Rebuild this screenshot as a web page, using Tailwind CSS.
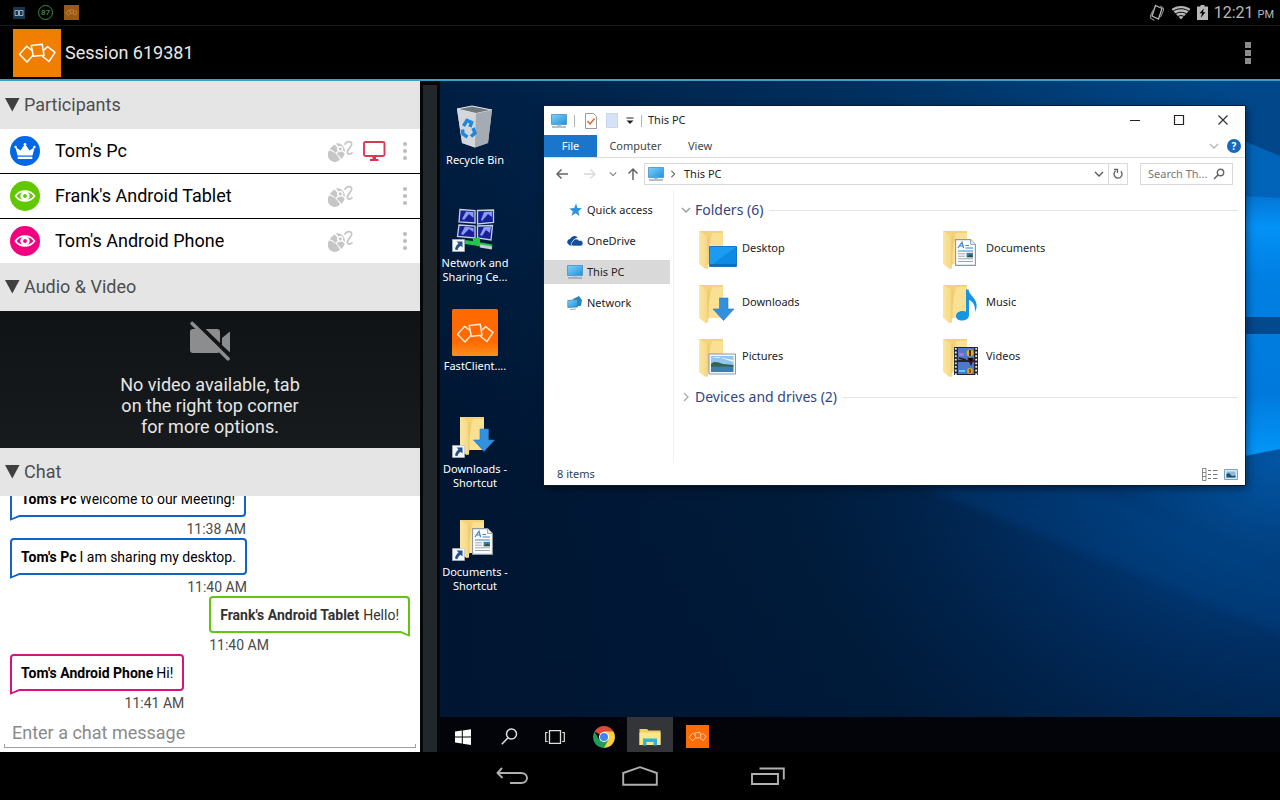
<!DOCTYPE html>
<html lang="en">
<head>
    <meta charset="UTF-8">
    <meta name="viewport" content="width=device-width, initial-scale=1.0">
    <title>Session 619381</title>
    <script src="https://cdn.jsdelivr.net/npm/@tailwindcss/browser@4"></script>
    <style>
        body {
            font-family: Roboto, "Liberation Sans", sans-serif;
        }
        .desktop {
            font-family: "Noto Sans", "Open Sans", sans-serif;
        }
    </style>
</head>
<body class="flex h-screen flex-col overflow-hidden bg-black text-white">

    <!-- Shared icons (not display:none, the gradients would be lost) -->
    <svg class="absolute size-0" aria-hidden="true">
        <defs>
            <linearGradient id="folderFront" x1="0" y1="0" x2="1" y2="0">
                <stop offset="0" stop-color="#fbe6a2"/>
                <stop offset="1" stop-color="#f5d77f"/>
            </linearGradient>
            <linearGradient id="screenBlue" x1="0" y1="0" x2="1" y2="1">
                <stop offset="0" stop-color="#7fd0f8"/>
                <stop offset="1" stop-color="#1d93e0"/>
            </linearGradient>
            <linearGradient id="orange" x1="0" y1="0" x2="0" y2="1">
                <stop offset="0" stop-color="#ff6a00"/>
                <stop offset=".7" stop-color="#ff6a00"/>
                <stop offset="1" stop-color="#fb9020"/>
            </linearGradient>
        </defs>
        <symbol id="squares" viewBox="0 0 48 48">
            <g fill="none" stroke="currentColor" stroke-width="1.5" stroke-linejoin="round">
                <path d="M19 21.5 13.7 17.3 6.5 25.3 14 33 20.5 25.8"/>
                <path d="M18.2 16.5 29.2 15.2 31 26.3 20.3 27.2Z"/>
                <path d="M30.5 21.5 34.6 17.6 42 23.4 36 32.5 29.3 27.2"/>
            </g>
        </symbol>
        <symbol id="mouse" viewBox="0 0 26 22">
            <g fill="#c6c6c6">
                <path d="M1.200 10.600C5 11 9.500 14.800 12 19.500A7 7 0 0 1 1.200 10.600Z"/>
                <path d="M1.800 9.300C2.600 7.500 4.600 5.600 6.600 4.400L9.400 7.400A2.800 2.800 0 0 0 9.800 10.800L7.600 12.900C6 11.200 4 9.900 1.800 9.300Z"/>
                <path d="M13.200 18.900C12.200 17.200 10.600 15.200 8.700 13.800L11 11.600A2.800 2.800 0 0 0 14.200 11.200L16.600 13.600C16.200 15.800 15 17.800 13.200 18.900Z"/>
                <path d="M8 3.700C11.500 1.900 17.600 6 16.900 12L14.800 10A2.800 2.800 0 0 0 10.600 6.400Z"/>
                <circle cx="12.200" cy="8.900" r="1.600"/>
            </g>
            <path d="M17 4.200C18.500 .8 24.300 .6 23.600 4.600 23 7.800 18.500 9.800 19.400 12.800 20 14.800 22.500 14.500 24 12.800" fill="none" stroke="#c6c6c6" stroke-width="1.700" stroke-linecap="round"/>
        </symbol>
        <symbol id="eye" viewBox="0 0 30 30">
            <path d="M5.500 15C10 8.500 20 8.500 24.500 15 20 21.500 10 21.500 5.500 15Z" fill="none" stroke="#fff" stroke-width="1.800" stroke-linejoin="round"/>
            <circle cx="15" cy="15" r="3.300" fill="none" stroke="#fff" stroke-width="2.800"/>
        </symbol>
        <symbol id="dots" viewBox="0 0 6 20">
            <g fill="#bdbdbd">
                <circle cx="3" cy="3" r="2.100"/>
                <circle cx="3" cy="10" r="2.100"/>
                <circle cx="3" cy="17" r="2.100"/>
            </g>
        </symbol>
        <symbol id="pc" viewBox="0 0 16 16">
            <path d="M.5 1.500H15.500V11.500H.5Z" fill="url(#screenBlue)" stroke="#4a8fc0" stroke-width=".8"/>
            <path d="M6 11.800H10V13H6Z" fill="#a8c4d8"/>
            <path d="M1 14H15" stroke="#7f97a8" stroke-width="1.200"/>
        </symbol>
        <symbol id="folder" viewBox="0 0 40 40">
            <path d="M1 1H25V34H8Z" fill="#f3d27a"/>
            <path d="M14 3 25 3V34H8Z" fill="#f9e093"/>
            <path d="M1 1 10 6V38.500L7.500 39 1 34Z" fill="url(#folderFront)"/>
            <path d="M10 6V35" stroke="#e3bd61" stroke-width=".7"/>
        </symbol>
        <symbol id="arrowDown" viewBox="0 0 22 24">
            <path d="M7 1H15.500V12H21.500L11 23.500.5 12H7Z" fill="#3390dc" stroke="#2577c4" stroke-width=".6"/>
        </symbol>
        <symbol id="document" viewBox="0 0 21 27">
            <path d="M.6.6H15.500L20.400 5.500V26.400H.6Z" fill="#fff" stroke="#8c98a3" stroke-width="1.100"/>
            <path d="M15.500.6V5.500H20.400" fill="#e5eaee" stroke="#8c98a3" stroke-width=".8"/>
            <path d="M3 9 7 3.200 8.600 9M4.600 7H8" fill="none" stroke="#3c84c4" stroke-width="1.200"/>
            <path d="M10.500 6.500H14M10.500 9H18M3 12H18" stroke="#3c84c4" stroke-width="1.100"/>
            <path d="M3 14.800H10M3 17.200H10M3 19.800H18M3 22.500H18" stroke="#9aa7b2" stroke-width="1"/>
            <path d="M11.500 13.800H18V18.200H11.500Z" fill="#3f7fa8"/>
            <path d="M11.500 18.200 15 15.500 18 17V18.200Z" fill="#2c5345"/>
        </symbol>
        <symbol id="shortcut" viewBox="0 0 13 13">
            <path d="M.5.500H12.500V12.500H.500Z" fill="#f4f6f9" stroke="#b9c0c8" stroke-width=".6"/>
            <path d="M4.600 2.500H10.500V8.400L8.700 6.700C6.800 8 5.800 9.300 5.500 11.200L3 10.500C3.300 8.200 4.500 6.300 6.500 4.500Z" fill="#23528f"/>
        </symbol>
        <symbol id="chevron" viewBox="0 0 10 10">
            <path d="M1 3 5 7 9 3" fill="none" stroke="currentColor" stroke-width="1.300"/>
        </symbol>
        <symbol id="tailLeft" viewBox="0 0 12 10">
            <path d="M0 0H12V5H10L1 9.600V0Z" fill="#fff"/>
            <path d="M1 0V8.300L9 5H12" fill="none" stroke="currentColor" stroke-width="2"/>
            <path d="M2 0H12V4H9L2 7Z" fill="#fff"/>
        </symbol>
    </svg>

    <!-- Status bar -->
    <div class="flex h-[26px] shrink-0 items-center border-b border-[#1a1a1a] pr-1.5 pl-[13px] text-[#b8b8b8]">
        <svg class="size-3" viewBox="0 0 12 12">
            <path d="M0 0H12V12H0Z" fill="#17364f"/>
            <path d="M2 3.500H5.500V8.500H2ZM6.500 3.500H10V8.500H6.500Z" fill="none" stroke="#a9bac6" stroke-width=".9"/>
        </svg>
        <span class="ml-[13px] flex size-[15px] items-center justify-center rounded-full border border-[#3d8a48] text-[8px] leading-none text-[#5aa863]">87</span>
        <svg class="ml-[11px] size-[15px] bg-[#9c5a10] text-[#d3a776]"><use href="#squares"/></svg>
        <svg class="ml-auto h-[18px] w-4" viewBox="0 0 16 18">
            <path d="M6.500 1.500 13 4.500 9.500 15 3 12Z" fill="none" stroke="#b8b8b8" stroke-width="1.300"/>
            <path d="M4.500 5.500 1.500 11.500V14L5.500 16.500M11.500 2 14.500 4.500V6.500L11.500 13" fill="none" stroke="#8a8a8a" stroke-width="1.100"/>
        </svg>
        <svg class="ml-1.5 h-[15px] w-5" viewBox="0 0 20 15">
            <path d="M10 14.500.5 4C6 0 14 0 19.500 4Z" fill="#b8b8b8"/>
            <path d="M1.500 6.500C7 2.800 13 2.800 18.500 6.500M4 9.300C7.500 6.600 12.500 6.600 16 9.300M6.500 11.800C8.500 10.200 11.500 10.200 13.500 11.800" fill="none" stroke="#000" stroke-width="1"/>
        </svg>
        <svg class="ml-1.5 h-[15px] w-[11px]" viewBox="0 0 11 15">
            <path d="M3.500 0H7.500V1.500H11V15H0V1.500H3.500Z" fill="#b8b8b8"/>
            <path d="M6.800 3.500 2.500 8.300H5L3.800 12.800 8.500 7.300H6Z" fill="#000"/>
        </svg>
        <span class="ml-1.5 text-base leading-none">12:21 <span class="text-[11px]">PM</span></span>
    </div>

    <!-- Action bar -->
    <header class="flex h-[55px] shrink-0 items-center border-b-2 border-[#3aa0c8] pl-[13px]">
        <svg class="size-12 bg-[#f07f00] text-white"><use href="#squares"/></svg>
        <h1 class="ml-1 text-lg text-[#e8e8e8]">Session 619381</h1>
        <button type="button" aria-label="More options" class="ml-auto flex h-full w-16 flex-col items-center justify-center gap-0.5">
            <span class="size-1.5 bg-[#8b8b8b]"></span>
            <span class="size-1.5 bg-[#8b8b8b]"></span>
            <span class="size-1.5 bg-[#8b8b8b]"></span>
        </button>
    </header>

    <main class="flex min-h-0 flex-1">
        <!-- Session panel -->
        <aside class="flex w-[420px] shrink-0 flex-col bg-white text-black">
            <button type="button" class="flex h-12 shrink-0 items-center gap-1 bg-[#e5e5e5] pl-[5px] text-left text-lg text-[#4d4d4d]">
                <svg class="h-3.5 w-[15px]" viewBox="0 0 15 14"><path d="M0 0H14.500L7.300 13.500Z" fill="#3f3f3f"/></svg>
                Participants
            </button>
            <ul class="shrink-0 divide-y divide-black text-lg">
                <li class="flex h-[45px] items-center pl-2.5">
                    <span class="size-[30px] rounded-full bg-[#0068e6]">
                        <svg viewBox="0 0 30 30">
                            <path d="M7.500 19.500 5.300 11 10.500 14.500 15 8 19.500 14.500 24.700 11 22.500 19.500Z" fill="#fff"/>
                            <circle cx="5.600" cy="11" r="1.200" fill="#fff"/><circle cx="15" cy="8.200" r="1.300" fill="#fff"/><circle cx="24.400" cy="11" r="1.200" fill="#fff"/>
                            <path d="M7.700 20.700H22.300V23H7.700Z" fill="#fff"/>
                        </svg>
                    </span>
                    <span class="ml-[15px]">Tom's Pc</span>
                    <svg class="ml-auto h-[22px] w-[26px]"><use href="#mouse"/></svg>
                    <svg class="ml-2 h-[22px] w-6" viewBox="0 0 24 22">
                        <rect x="2" y="2" width="20.500" height="14" rx="1.500" fill="none" stroke="#d93a52" stroke-width="1.900"/>
                        <path d="M10.500 16.500H14V19H16.500V21H8V19H10.500Z" fill="#e0324c"/>
                    </svg>
                    <button type="button" aria-label="Options for Tom's Pc" class="flex h-full w-[34px] items-center justify-center pl-1"><svg class="h-5 w-1.5"><use href="#dots"/></svg></button>
                </li>
                <li class="flex h-[45px] items-center pl-2.5">
                    <svg class="size-[30px] rounded-full bg-[#61c800]"><use href="#eye"/></svg>
                    <span class="ml-[15px]">Frank's Android Tablet</span>
                    <svg class="mr-8 ml-auto h-[22px] w-[26px]"><use href="#mouse"/></svg>
                    <button type="button" aria-label="Options for Frank's Android Tablet" class="flex h-full w-[34px] items-center justify-center pl-1"><svg class="h-5 w-1.5"><use href="#dots"/></svg></button>
                </li>
                <li class="flex h-11 items-center pl-2.5">
                    <svg class="size-[30px] rounded-full bg-[#f2007f]"><use href="#eye"/></svg>
                    <span class="ml-[15px]">Tom's Android Phone</span>
                    <svg class="mr-8 ml-auto h-[22px] w-[26px]"><use href="#mouse"/></svg>
                    <button type="button" aria-label="Options for Tom's Android Phone" class="flex h-full w-[34px] items-center justify-center pl-1"><svg class="h-5 w-1.5"><use href="#dots"/></svg></button>
                </li>
            </ul>

            <button type="button" class="flex h-12 shrink-0 items-center gap-1 bg-[#e5e5e5] pl-[5px] text-left text-lg text-[#4d4d4d]">
                <svg class="h-3.5 w-[15px]" viewBox="0 0 15 14"><path d="M0 0H14.500L7.300 13.500Z" fill="#3f3f3f"/></svg>
                Audio &amp; Video
            </button>
            <div class="flex shrink-0 flex-col items-center bg-linear-to-b from-[#101315] to-[#181b1e] pt-2.5 pb-[11px]">
                <svg class="size-10" viewBox="0 0 40 40">
                    <path d="M3 8H27Q30 8 30 11V29Q30 32 27 32H3Q0 32 0 29V11Q0 8 3 8Z" fill="#8b8d8f"/>
                    <path d="M32 17 40 10.500V31.500L32 25Z" fill="#8b8d8f"/>
                    <path d="M4.500 0 41 35.500" stroke="#121517" stroke-width="4"/>
                    <path d="M2.200 2.500 38 37.800" stroke="#8b8d8f" stroke-width="3.600" stroke-linecap="round"/>
                </svg>
                <p class="mt-[13px] text-center text-lg leading-[21px] text-[#e6e6e6]">No video available, tab<br>on the right top corner<br>for more options.</p>
            </div>

            <button type="button" class="flex h-12 shrink-0 items-center gap-1 bg-[#e5e5e5] pl-[5px] text-left text-lg text-[#4d4d4d]">
                <svg class="h-3.5 w-[15px]" viewBox="0 0 15 14"><path d="M0 0H14.500L7.300 13.500Z" fill="#3f3f3f"/></svg>
                Chat
            </button>
            <div class="flex min-h-0 flex-1 flex-col justify-end overflow-hidden px-2.5 pb-0.5 text-sm">
                <div class="flex shrink-0 flex-col items-end self-start">
                    <p class="relative mb-1 flex h-[37px] items-center gap-[3px] rounded border-2 border-[#1263c6] px-[9px]">
                        <b class="font-bold">Tom's Pc</b> Welcome to our Meeting!
                        <svg class="absolute top-[29px] -left-0.5 h-2.5 w-3 text-[#1263c6]"><use href="#tailLeft"/></svg>
                    </p>
                    <time class="leading-[17px] text-[#4a4a4a]">11:38 AM</time>
                </div>
                <div class="flex shrink-0 flex-col items-end self-start">
                    <p class="relative mb-1 flex h-[37px] items-center gap-[3px] rounded border-2 border-[#1263c6] px-[9px]">
                        <b class="font-bold">Tom's Pc</b> I am sharing my desktop.
                        <svg class="absolute top-[29px] -left-0.5 h-2.5 w-3 text-[#1263c6]"><use href="#tailLeft"/></svg>
                    </p>
                    <time class="leading-[17px] text-[#4a4a4a]">11:40 AM</time>
                </div>
                <div class="flex shrink-0 flex-col items-start self-end">
                    <p class="relative mb-1 flex h-[37px] items-center gap-1 rounded border-2 border-[#62c40c] px-[9px] text-[#333]">
                        <b class="font-bold">Frank's Android Tablet</b> Hello!
                        <svg class="absolute top-[29px] -right-0.5 h-2.5 w-3 -scale-x-100 text-[#62c40c]"><use href="#tailLeft"/></svg>
                    </p>
                    <time class="leading-[17px] text-[#4a4a4a]">11:40 AM</time>
                </div>
                <div class="flex shrink-0 flex-col items-end self-start">
                    <p class="relative mb-1 flex h-[37px] items-center gap-[3px] rounded border-2 border-[#d8127c] px-[9px]">
                        <b class="font-bold">Tom's Android Phone</b> Hi!
                        <svg class="absolute top-[29px] -left-0.5 h-2.5 w-3 text-[#d8127c]"><use href="#tailLeft"/></svg>
                    </p>
                    <time class="leading-[17px] text-[#4a4a4a]">11:41 AM</time>
                </div>
            </div>
            <form class="shrink-0 px-1 pt-2 pb-1">
                <input type="text" aria-label="Chat message" placeholder="Enter a chat message" class="block h-[22px] w-full px-2 text-lg placeholder-[#8a8a8a] outline-none">
                <div class="h-1 border-x border-b border-[#a0a0a0]"></div>
            </form>
        </aside>

        <!-- Splitter -->
        <div class="w-5 shrink-0 border-t-4 border-r-[3px] border-l-[3px] border-[#050608] bg-[#22272b]"></div>

        <!-- Shared desktop -->
        <section class="desktop flex min-w-0 flex-1 flex-col">
            <div class="relative min-h-0 flex-1 overflow-hidden bg-[#00142e]">
                <svg class="absolute inset-0 size-full" viewBox="0 0 840 636" preserveAspectRatio="none">
                    <defs>
                        <linearGradient id="skyTop" x1="0" y1="0" x2="1" y2="0">
                            <stop offset="0" stop-color="#001e42"/>
                            <stop offset=".5" stop-color="#00305f"/>
                            <stop offset="1" stop-color="#014d92"/>
                        </linearGradient>
                        <linearGradient id="skyFade" x1="0" y1="0" x2="0" y2="1">
                            <stop offset="0" stop-color="#001026" stop-opacity="0"/>
                            <stop offset=".6" stop-color="#001026" stop-opacity=".6"/>
                            <stop offset="1" stop-color="#00122c" stop-opacity=".75"/>
                        </linearGradient>
                        <radialGradient id="glow" cx="1" cy=".6" r=".6">
                            <stop offset="0" stop-color="#0256a4"/>
                            <stop offset=".5" stop-color="#01326c" stop-opacity=".7"/>
                            <stop offset="1" stop-color="#01244e" stop-opacity="0"/>
                        </radialGradient>
                        <linearGradient id="beam" x1="0" y1="0" x2="0" y2="1">
                            <stop offset="0" stop-color="#0275d4"/>
                            <stop offset=".12" stop-color="#0492f6"/>
                            <stop offset=".3" stop-color="#0080e4"/>
                            <stop offset=".75" stop-color="#0079dc"/>
                            <stop offset="1" stop-color="#0498fb"/>
                        </linearGradient>
                        <filter id="soft" x="-20%" y="-20%" width="140%" height="140%"><feGaussianBlur stdDeviation="5"/></filter>
                    </defs>
                    <rect width="840" height="636" fill="url(#skyTop)"/>
                    <rect width="840" height="636" fill="url(#skyFade)"/>
                    <rect width="840" height="636" fill="url(#glow)"/>
                    <path d="M480 404 640 404 860 500V560Z" fill="#02468c" opacity=".3" filter="url(#soft)"/>
                    <path d="M790 0H840V75L790 58Z" fill="#01478a"/>
                    <path d="M790 54 840 75V118L790 114Z" fill="#0264b8"/>
                    <path d="M790 114 840 117V368L790 378Z" fill="url(#beam)"/>
                    <path d="M790 236H840V253H790Z" fill="#03498d"/>
                </svg>

                <!-- Desktop icons -->
                <div class="relative mt-[22px] flex w-[70px] flex-col text-center text-[11px] leading-[14px]">
                    <div class="flex h-[103px] flex-col items-center gap-0.5">
                        <svg class="size-12" viewBox="0 0 48 48">
                            <path d="M6 6 21 3 41 7 37 40 24 44.500 11 40Z" fill="#b9bfc5"/>
                            <path d="M6 6 21 3 41 7 25 10.500Z" fill="#71787f" stroke="#e0e4e8" stroke-width="1"/>
                            <path d="M6 6 25 10.500 24 44.500 11 40Z" fill="#d3d7db"/>
                            <path d="M25 10.500 41 7 37 40 24 44.500Z" fill="#a4abb2"/>
                            <path d="M12.500 23 16 17.500 20.500 19.500 19 24M22 25 24 30 20 33.500M16.500 34 12 31 11.500 26.500" fill="none" stroke="#1e88dc" stroke-width="3.500"/>
                        </svg>
                        <span>Recycle Bin</span>
                    </div>
                    <div class="flex h-[103px] flex-col items-center gap-0.5">
                        <svg class="size-12" viewBox="0 0 48 48">
                            <g fill="#15209a" stroke="#c8cfdd" stroke-width="1.300">
                                <path d="M9 3.500 24 4.500V17L8 16Z"/>
                                <path d="M26.500 4.500 42.500 4V16.500L26.500 18Z"/>
                                <path d="M8 19 24 20V32L6.500 30.500Z"/>
                                <path d="M26.500 20 41.500 19.500 40 34 26.500 32Z"/>
                            </g>
                            <path d="M15 5.500 22.500 6V12L18 8 13 14 11 13ZM33 6 41 5.500V11L37 8 31 15 30 14ZM14 20.500 22.500 22V26L18 23 12 29 10 28ZM33 21 40 20.500 39 27 35 24 31 30 29 29Z" fill="#8b9cf0"/>
                            <path d="M14 36 24 37.500V34H27V38L41 40.500" fill="none" stroke="#22c44a" stroke-width="4"/>
                            <path d="M29 40 41 42" stroke="#c9ced2" stroke-width="3"/>
                            <use href="#shortcut" x="1" y="33" width="13" height="13"/>
                        </svg>
                        <span>Network and<br>Sharing Ce...</span>
                    </div>
                    <div class="flex h-[103px] flex-col items-center gap-0.5">
                        <svg class="size-12" viewBox="0 0 48 48">
                            <rect x="1" width="46" height="47" rx="1.500" fill="url(#orange)"/>
                            <use href="#squares" width="48" height="48" class="text-[#ffe6cf]"/>
                        </svg>
                        <span>FastClient....</span>
                    </div>
                    <div class="flex h-[103px] flex-col items-center gap-0.5">
                        <svg class="size-12" viewBox="0 0 48 48">
                            <use href="#folder" x="8" y="4" width="40" height="40"/>
                            <use href="#arrowDown" x="22" y="16" width="22" height="24"/>
                            <use href="#shortcut" x="1" y="33" width="13" height="13"/>
                        </svg>
                        <span>Downloads -<br>Shortcut</span>
                    </div>
                    <div class="flex h-[103px] flex-col items-center gap-0.5">
                        <svg class="size-12" viewBox="0 0 48 48">
                            <use href="#folder" x="8" y="4" width="40" height="40"/>
                            <use href="#document" x="21" y="13" width="21" height="27"/>
                            <use href="#shortcut" x="1" y="33" width="13" height="13"/>
                        </svg>
                        <span>Documents -<br>Shortcut</span>
                    </div>
                </div>

                <!-- Explorer window -->
                <div class="absolute top-[25px] right-[35px] left-[104px] flex h-[379px] flex-col bg-white text-[11px] text-[#222] shadow-[0_0_0_1px_#0a1c33,2px_3px_8px_rgba(0,0,0,0.5)]">
                    <div class="flex h-[29px] shrink-0 items-center pl-[7px]">
                        <svg class="size-4"><use href="#pc"/></svg>
                        <span class="ml-[7px] h-3 w-px bg-[#b5b5b5]"></span>
                        <svg class="ml-2.5 h-4 w-3" viewBox="0 0 12 16">
                            <path d="M.5.500H8.500L11.500 3.500V15.500H.500Z" fill="#fff" stroke="#9b9b9b"/>
                            <path d="M2.500 8 5 11 9.500 5.500" fill="none" stroke="#d9733a" stroke-width="1.700"/>
                        </svg>
                        <span class="ml-[9px] h-[15px] w-3 border border-[#c9d8ee] bg-[#d5e2f5]"></span>
                        <svg class="ml-2 h-2 w-2" viewBox="0 0 8 8"><path d="M.5 1H7.500" stroke="#222"/><path d="M.5 3.500H7.500L4 7Z" fill="#222"/></svg>
                        <span class="ml-[7px] h-3 w-px bg-[#b5b5b5]"></span>
                        <span class="ml-1.5">This PC</span>
                        <button type="button" aria-label="Minimize" class="ml-auto flex h-full w-11 items-center justify-center"><svg class="size-3" viewBox="0 0 12 12"><path d="M1 5.500H11" stroke="#222"/></svg></button>
                        <button type="button" aria-label="Maximize" class="flex h-full w-11 items-center justify-center"><svg class="size-3" viewBox="0 0 12 12"><path d="M1.500.500H10.500V9.500H1.500Z" fill="none" stroke="#222" stroke-width="1.200"/></svg></button>
                        <button type="button" aria-label="Close" class="flex h-full w-11 items-center justify-center"><svg class="size-3" viewBox="0 0 12 12"><path d="M1.500.500 10.500 9.500M10.500.500 1.500 9.500" fill="none" stroke="#333" stroke-width="1.200"/></svg></button>
                    </div>
                    <div class="flex h-[23px] shrink-0 items-stretch border-b border-[#dcdcdc] pr-1 text-[#444]">
                        <button type="button" class="w-[53px] bg-[#1a76cb] text-white">File</button>
                        <button type="button" class="w-[77px]">Computer</button>
                        <button type="button" class="w-[52px]">View</button>
                        <button type="button" aria-label="Expand ribbon" class="mr-2 ml-auto text-[#b5b5b5]"><svg class="size-2.5"><use href="#chevron"/></svg></button>
                        <button type="button" aria-label="Help" class="my-1 flex size-3.5 items-center justify-center self-center rounded-full bg-[#1469b8] text-[10px] font-bold text-white">?</button>
                    </div>
                    <div class="flex h-8 shrink-0 items-center pr-3 pl-[11px] text-[#666]">
                        <svg class="size-3.5" viewBox="0 0 14 14"><path d="M13 7H2M6.500 2.500 2 7 6.500 11.500" fill="none" stroke="#666" stroke-width="1.500"/></svg>
                        <svg class="ml-3.5 size-3.5" viewBox="0 0 14 14"><path d="M1 7H12M7.500 2.500 12 7 7.500 11.500" fill="none" stroke="#d8d8d8" stroke-width="1.300"/></svg>
                        <svg class="ml-3 size-2 text-[#777]"><use href="#chevron"/></svg>
                        <svg class="ml-[9px] size-3.5" viewBox="0 0 14 14"><path d="M7 13V2M2.500 6.500 7 2 11.500 6.500" fill="none" stroke="#666" stroke-width="1.500"/></svg>
                        <div class="ml-1 flex h-[22px] flex-1 items-center border border-[#d9d9d9] pl-[3px] text-[#222]">
                            <svg class="size-4"><use href="#pc"/></svg>
                            <svg class="ml-[5px] size-2 -rotate-90 text-[#555]"><use href="#chevron"/></svg>
                            <span class="ml-[7px]">This PC</span>
                            <svg class="mr-1 ml-auto size-2.5 text-[#555]"><use href="#chevron"/></svg>
                            <button type="button" aria-label="Refresh" class="flex h-full w-[19px] items-center justify-center border-l border-[#d9d9d9]">
                                <svg class="size-3" viewBox="0 0 12 12"><path d="M8.800 3.200A4 4 0 1 1 3.500 3M2 1.500H5.500V5" fill="none" stroke="#666" stroke-width="1.400"/></svg>
                            </button>
                        </div>
                        <div class="ml-3 flex h-[22px] w-[93px] items-center border border-[#d9d9d9] pr-[7px] pl-[7px]">
                            <input type="text" aria-label="Search This PC" placeholder="Search Th..." class="w-full min-w-0 placeholder-[#777] outline-none">
                            <svg class="size-3 shrink-0" viewBox="0 0 12 12"><circle cx="7.500" cy="4.500" r="3.200" fill="none" stroke="#666" stroke-width="1.400"/><path d="M5.200 6.800 1 11" stroke="#666" stroke-width="1.600"/></svg>
                        </div>
                    </div>
                    <div class="flex min-h-0 flex-1">
                        <nav class="flex w-[130px] shrink-0 flex-col gap-[7px] border-r border-[#f0f0f0] pt-2 pr-[3px]">
                            <a href="#" class="flex h-6 items-center gap-1 pl-[23px]">
                                <svg class="size-4" viewBox="0 0 16 16"><path d="M9 1.500 10.500 6 15 6.300 11.300 9.200 12.500 14 8.600 11.300 4.500 14 5.800 9.400 2.500 6.500 7.200 6Z" fill="#2f93dc"/></svg>
                                Quick access
                            </a>
                            <a href="#" class="flex h-6 items-center gap-1 pl-[23px]">
                                <svg class="size-4" viewBox="0 0 16 16"><path d="M1 11A3 3 0 0 1 3 6 4.500 4.500 0 0 1 10.500 4.500L7 6.500 5 9 5 12.500H3Z" fill="#0f4f9e"/><path d="M5.500 13A2.700 2.700 0 0 1 6 8.300 3.300 3.300 0 0 1 12 7.500 2.800 2.800 0 0 1 14 13Z" fill="#164f96" stroke="#fff" stroke-width=".6"/></svg>
                                OneDrive
                            </a>
                            <a href="#" class="flex h-6 items-center gap-1 bg-[#d9d9d9] pl-[23px]">
                                <svg class="size-4"><use href="#pc"/></svg>
                                This PC
                            </a>
                            <a href="#" class="flex h-6 items-center gap-1 pl-[23px]">
                                <svg class="size-4" viewBox="0 0 16 16"><path d="M6 4 12 1 15 5 14 11 8 11Z" fill="#2d86bd"/><path d="M.8 5.500 10.500 4.500V12L.8 12.500Z" fill="url(#screenBlue)" stroke="#3580ad" stroke-width=".7"/><path d="M3 14.500 9 14" stroke="#8fb3c8" stroke-width="1.200"/></svg>
                                Network
                            </a>
                        </nav>
                        <div class="min-w-0 flex-1 pt-[9px] pr-[7px] pl-[7px]">
                            <div class="flex h-[22px] items-center text-sm text-[#33447f]">
                                <svg class="size-2.5 text-[#999]"><use href="#chevron"/></svg>
                                <h2 class="ml-1">Folders (6)</h2>
                                <span class="ml-1.5 h-px flex-1 bg-[#e4e4e4]"></span>
                            </div>
                            <div class="mt-[9px] grid grid-cols-[244px_1fr] gap-y-3.5 pl-[17px]">
                                <button type="button" class="flex h-10 items-center gap-1 text-left">
                                    <svg class="size-10" viewBox="0 0 40 40"><use href="#folder" width="40" height="40"/><path d="M11.500 16.500H38.500V36.500H11.500Z" fill="#1b9cf0" stroke="#1978c0"/><path d="M12 36 38 17V36Z" fill="#0d8be4"/><path d="M12 35H38" stroke="#1265a8" stroke-width="1.500"/></svg>
                                    <span class="pb-1">Desktop</span>
                                </button>
                                <button type="button" class="flex h-10 items-center gap-1 text-left">
                                    <svg class="size-10" viewBox="0 0 40 40"><use href="#folder" width="40" height="40"/><use href="#document" x="13" y="9" width="21" height="27"/></svg>
                                    <span class="pb-1">Documents</span>
                                </button>
                                <button type="button" class="flex h-10 items-center gap-1 text-left">
                                    <svg class="size-10" viewBox="0 0 40 40"><use href="#folder" width="40" height="40"/><use href="#arrowDown" x="14.500" y="13" width="22" height="24"/></svg>
                                    <span class="pb-1">Downloads</span>
                                </button>
                                <button type="button" class="flex h-10 items-center gap-1 text-left">
                                    <svg class="size-10" viewBox="0 0 40 40"><use href="#folder" width="40" height="40"/><path d="M24 5.500H26.500C27 12 36 14 34.500 24L33 28C33.500 20 30 17 27 16V31C27 38 14 38.500 14 32 14 27.500 20 26 24 27.500Z" fill="#1595e2"/></svg>
                                    <span class="pb-1">Music</span>
                                </button>
                                <button type="button" class="flex h-10 items-center gap-1 text-left">
                                    <svg class="size-10" viewBox="0 0 40 40"><use href="#folder" width="40" height="40"/><path d="M11 16H37.500V36H11Z" fill="#f5f7f8" stroke="#8a9aa5"/><path d="M13 18H35.500V27H13Z" fill="#8cc8f0"/><path d="M13 20 20 19 35.500 24V22L25 20Z" fill="#e8f5fc"/><path d="M13 26C16 23 19 24 25 26L35.500 27V29H13Z" fill="#35614f"/><path d="M13 28.500H35.500V34H13Z" fill="#3f7dad"/></svg>
                                    <span class="pb-1">Pictures</span>
                                </button>
                                <button type="button" class="flex h-10 items-center gap-1 text-left">
                                    <svg class="size-10" viewBox="0 0 40 40"><use href="#folder" width="40" height="40"/><path d="M12 9H36V37H12Z" fill="#22262c"/><path d="M16 10H32V22H16ZM16 24H32V36H16Z" fill="#4b78d0"/><path d="M13.800 10V37M34.200 10V37" stroke="#e8e8e8" stroke-width="1.800" stroke-dasharray="1.800 1.800"/><circle cx="28" cy="15" r="3.500" fill="#d8b020"/><path d="M28 12V18M26 20 29 26 31 20M17 20 24 22" stroke="#3a1515" stroke-width="1.700"/><path d="M17 15H22V18H17Z" fill="#9b7fc8"/><circle cx="28" cy="33" r="3" fill="#d8a818"/><path d="M28 31V35" stroke="#a02020" stroke-width="1.500"/><path d="M17 32H23V34H17Z" fill="#5fd0e8"/></svg>
                                    <span class="pb-1">Videos</span>
                                </button>
                            </div>
                            <div class="mt-2 flex h-[22px] items-center text-sm text-[#33447f]">
                                <svg class="size-2.5 -rotate-90 text-[#aaa]"><use href="#chevron"/></svg>
                                <h2 class="ml-1">Devices and drives (2)</h2>
                                <span class="ml-1.5 h-px flex-1 bg-[#e4e4e4]"></span>
                            </div>
                        </div>
                    </div>
                    <div class="flex h-[22px] shrink-0 items-center pr-[7px] pl-[13px] text-[#2c3f5e]">
                        8 items
                        <svg class="ml-auto h-[13px] w-4" viewBox="0 0 16 13"><path d="M.5.500H4V12.500H.5ZM.5 4.500H4M.5 8.500H4" fill="none" stroke="#888"/><path d="M6 2.500H9M11 2.500H15.500M6 6.500H9M11 6.500H15.500M6 10.500H9M11 10.500H15.500" stroke="#777"/></svg>
                        <svg class="ml-1.5 h-[11px] w-3.5" viewBox="0 0 14 11"><path d="M.5.500H13.500V10.500H.5Z" fill="#d5e8f7" stroke="#7aa3c4"/><path d="M2.500 2.500H11.500V8.500H2.500Z" fill="#8bbbe0"/><path d="M2.500 8.500V5L5 4 8 7 11.500 6.500V8.500Z" fill="#254f68"/></svg>
                    </div>
                </div>
            </div>

            <!-- Taskbar -->
            <div class="flex h-[35px] shrink-0 items-stretch bg-[#020409]">
                <button type="button" aria-label="Start" class="flex w-[46px] items-center justify-center pt-1">
                    <svg class="size-4" viewBox="0 0 16 16"><path d="M0 2.500 6.800 1.500V7.600H0ZM7.800 1.400 16 .2V7.600H7.800ZM0 8.500H6.800V14.600L0 13.600ZM7.800 8.500H16V16L7.800 14.700Z" fill="#fff"/></svg>
                </button>
                <button type="button" aria-label="Search" class="flex w-[46px] items-center justify-center pt-1">
                    <svg class="size-[17px]" viewBox="0 0 17 17"><circle cx="10.500" cy="6" r="5" fill="none" stroke="#ddd" stroke-width="1.500"/><path d="M7 9.800.8 16.200" stroke="#ddd" stroke-width="1.600"/></svg>
                </button>
                <button type="button" aria-label="Task view" class="flex w-[46px] items-center justify-center pt-1">
                    <svg class="h-3.5 w-5" viewBox="0 0 20 14"><path d="M4.500.700H15.500V13.300H4.500Z" fill="none" stroke="#ddd" stroke-width="1.300"/><path d="M2.800 2.500H.7V11.500H2.800M17.200 2.500H19.300V11.500H17.200" fill="none" stroke="#ddd" stroke-width="1.200"/></svg>
                </button>
                <button type="button" aria-label="Chrome" class="ml-0.5 flex w-[47px] items-center justify-center pt-1">
                    <svg class="size-[22px]" viewBox="0 0 22 22">
                        <path d="M11 11 1.500 5.500A11 11 0 0 1 20.500 5.500Z" fill="#dc4a3d"/>
                        <path d="M11 11V5.500H20.500A11 11 0 0 1 11 22Z" fill="#fbcf3e"/>
                        <path d="M11 11 6 13.500 1.500 5.500A11 11 0 0 0 11 22L15.500 13.500Z" fill="#1f9e58"/>
                        <circle cx="11" cy="11" r="5" fill="#fff"/><circle cx="11" cy="11" r="4" fill="#4583ee"/>
                    </svg>
                </button>
                <button type="button" aria-label="File Explorer" class="flex w-[46px] items-center justify-center bg-[#333539] pt-1">
                    <svg class="h-[18px] w-[22px]" viewBox="0 0 22 18"><path d="M.5 1H8L9.500 2.500H21.500V17H.5Z" fill="#f0cf63"/><path d="M.5 4.500H21.500V17H.5Z" fill="#fbe58d"/><path d="M4 10.500H18V17.500H14.500V14H7.500V17.500H4Z" fill="#2fb1e6"/></svg>
                </button>
                <button type="button" aria-label="FastClient" class="flex w-12 items-center justify-center pt-1">
                    <svg class="size-[23px] bg-[#fd6c08] text-[#ffe0c4]"><use href="#squares"/></svg>
                </button>
            </div>
        </section>
    </main>

    <!-- Navigation bar -->
    <nav class="flex h-12 shrink-0 items-center justify-center">
        <button type="button" aria-label="Back" class="flex h-full w-32 items-center justify-center">
            <svg class="h-[18px] w-8" viewBox="0 0 32 18"><path d="M6 1 1.500 6 6.500 11M2 6H25C33 6 33 16 25 16H14" fill="none" stroke="#b0b0b0" stroke-width="1.900"/></svg>
        </button>
        <button type="button" aria-label="Home" class="flex h-full w-32 items-center justify-center">
            <svg class="h-5 w-9" viewBox="0 0 36 20"><path d="M1.200 18.800V7L18 1.200 34.800 7V18.800Z" fill="none" stroke="#b0b0b0" stroke-width="1.900"/></svg>
        </button>
        <button type="button" aria-label="Recent apps" class="flex h-full w-32 items-center justify-center">
            <svg class="h-[18px] w-[34px]" viewBox="0 0 34 18"><path d="M1 7H27V17H1ZM8.500 1.500H32.800V12.500" fill="none" stroke="#b0b0b0" stroke-width="1.900"/></svg>
        </button>
    </nav>
</body>
</html>
